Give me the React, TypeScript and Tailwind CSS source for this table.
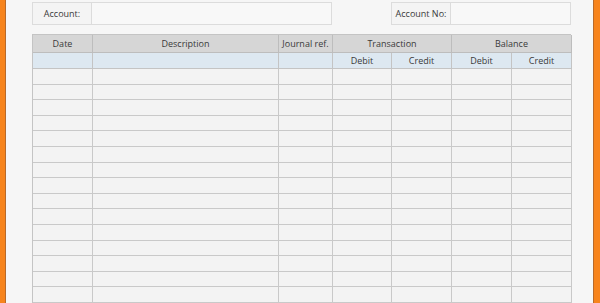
const cols = "grid grid-cols-[60px_186px_54px_59px_60px_60px_60px]";

export default function App() {
  const rows = Array.from({ length: 16 });
  return (
    <div className="w-[600px] h-[303px] flex overflow-hidden font-['Open_Sans',sans-serif] text-[#3a3a3a]">
      <div className="w-[6px] shrink-0 bg-[#f7841c] border-r border-[#b86a2a]" />
      <div className="flex-1 bg-[#f6f6f6] pl-[26px] flex flex-col">
        <div className="mt-[2px] flex shrink-0 h-[23px] text-[9px]">
          <div className="w-[60px] flex items-center justify-center border border-[#dcdcdc] bg-[#f4f4f4]">
            Account:
          </div>
          <div className="w-[240px] border border-l-0 border-[#dcdcdc] bg-[#f8f8f8]" />
          <div className="w-[59px]" />
          <div className="w-[60px] flex items-center justify-center border border-[#dcdcdc] bg-[#f4f4f4]">
            Account No:
          </div>
          <div className="w-[120px] border border-l-0 border-[#dcdcdc] bg-[#f8f8f8]" />
        </div>
        <div className="mt-[9px] shrink-0 w-[539px] border-l border-t border-[#c4c4c4] text-[9px]">
          <div className={`${cols} h-[18px] bg-[#d6d6d6]`}>
            <div className="flex items-center justify-center border-r border-b border-[#bdbdbd]">Date</div>
            <div className="flex items-center justify-center border-r border-b border-[#bdbdbd]">Description</div>
            <div className="flex items-center justify-center border-r border-b border-[#bdbdbd]">Journal ref.</div>
            <div className="col-span-2 flex items-center justify-center border-r border-b border-[#bdbdbd]">Transaction</div>
            <div className="col-span-2 flex items-center justify-center border-r border-b border-[#bdbdbd]">Balance</div>
          </div>
          <div className={`${cols} h-[16px] bg-[#dde8f1]`}>
            <div className="border-r border-b border-[#c4c4c4]" />
            <div className="border-r border-b border-[#c4c4c4]" />
            <div className="border-r border-b border-[#c4c4c4]" />
            <div className="flex items-center justify-center border-r border-b border-[#c4c4c4]">Debit</div>
            <div className="flex items-center justify-center border-r border-b border-[#c4c4c4]">Credit</div>
            <div className="flex items-center justify-center border-r border-b border-[#c4c4c4]">Debit</div>
            <div className="flex items-center justify-center border-r border-b border-[#c4c4c4]">Credit</div>
          </div>
          {rows.map((_, i) => (
            <div key={i} className={`${cols} h-[15.6px] bg-[#f3f3f3]`}>
              {Array.from({ length: 7 }).map((__, j) => (
                <div key={j} className="border-r border-b border-[#c9c9c9]" />
              ))}
            </div>
          ))}
        </div>
      </div>
      <div className="w-[7px] shrink-0 bg-[#f7841c] border-l border-[#b86a2a]" />
    </div>
  );
}
